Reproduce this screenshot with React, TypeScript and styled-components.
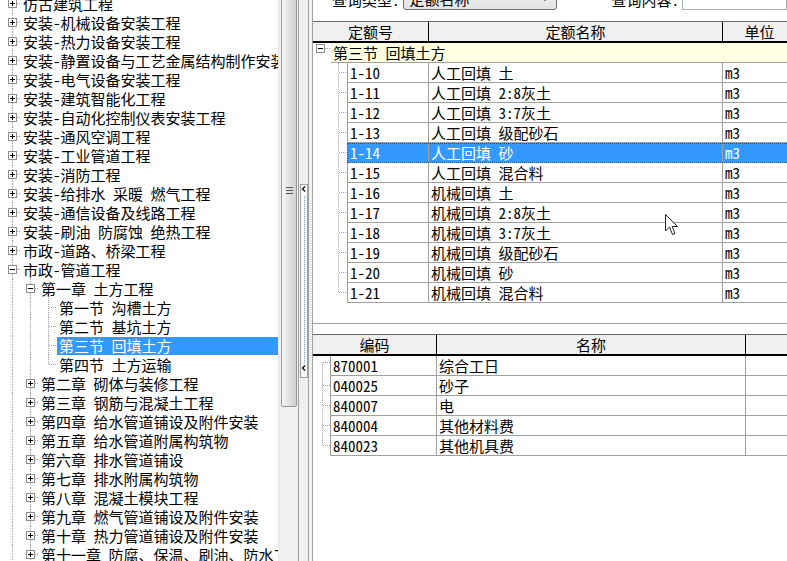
import React, {FC} from 'react';
import styled, {createGlobalStyle} from 'styled-components';

const FONT = `"Noto Sans Mono CJK SC", "Noto Sans CJK SC", "DejaVu Sans", sans-serif`;

const GlobalStyle = createGlobalStyle`
  html, body {
    margin: 0;
    padding: 0;
    background: #fff;
    overflow: hidden;
  }
  body {
    font-family: ${FONT};
    font-size: 15px;
    color: #000;
    font-feature-settings: "hwid";
  }
`;

const Screen = styled.div`
  position: relative;
  display: flex;
  width: 787px;
  height: 561px;
  overflow: hidden;
  background: #fff;
`;

/* ---------- left tree ---------- */

const TreePane = styled.div`
  width: 278px;
  flex: none;
  overflow: hidden;
`;

const TreeList = styled.div`
  margin-top: -6px;
`;

const TreeRow = styled.div`
  display: flex;
  align-items: flex-start;
  height: 19px;
  padding-left: 3px;
  white-space: pre;
`;

const TreeLabel = styled.span<{ $selected?: boolean }>`
  flex: 1;
  height: 18px;
  margin-top: 1px;
  padding-left: 2px;
  line-height: 17px;
  background: ${p => (p.$selected ? '#3399ff' : 'transparent')};
  color: ${p => (p.$selected ? '#fff' : '#000')};
`;

const ScrollTrack = styled.div`
  width: 20px;
  flex: none;
  box-sizing: border-box;
  padding: 0 1px 0 2px;
  background: #f0f0f0;
  border-left: 1px solid #e6e6e6;
`;

const ScrollThumb = styled.div`
  height: 434px;
  margin-top: -27px;
  box-sizing: border-box;
  border: 1px solid #979797;
  border-radius: 0 0 2px 2px;
  background: linear-gradient(to right, #f6f6f6, #e4e4e4 45%, #d2d2d2);
  display: flex;
  align-items: center;
  justify-content: center;
`;

const Grip = styled.div`
  width: 7px;
  height: 7px;
  background: repeating-linear-gradient(to bottom, #555 0 1px, transparent 1px 3px);
`;

const Splitter = styled.div`
  width: 11px;
  flex: none;
  box-sizing: border-box;
  padding-left: 1px;
  border-left: 1px solid #a0a0a0;
  border-right: 1px solid #a0a0a0;
  background: #f0f0f0;
  display: flex;
  align-items: center;
`;

const Gutter = styled.div`
  width: 3px;
  flex: none;
  background: #f0f0f0;
`;

type GuideKind = 'pipe' | 'blank' | 'tee' | 'ell';
type Toggle = '+' | '-';

const DOT = '#a0a0a0';

const TreeGuide: FC<{ kind: GuideKind; toggle?: Toggle }> = ({kind, toggle}) => (
  <svg width="18" height="19" viewBox="0 0 18 19" style={{flex: 'none'}}>
    {kind !== 'blank' && (
      <line x1="9.5" y1="0" x2="9.5" y2={kind === 'ell' ? 9.5 : 19} stroke={DOT} strokeDasharray="1 1"/>
    )}
    {(kind === 'tee' || kind === 'ell') && (
      <line x1="10" y1="9.5" x2="18" y2="9.5" stroke={DOT} strokeDasharray="1 1"/>
    )}
    {toggle && (
      <>
        <rect x="5.5" y="5.5" width="8" height="8" fill="#fff" stroke="#8f8f8f"/>
        <line x1="7" y1="9.5" x2="12" y2="9.5" stroke="#000"/>
        {toggle === '+' && <line x1="9.5" y1="7" x2="9.5" y2="12" stroke="#000"/>}
      </>
    )}
  </svg>
);

interface TreeNode {
  label: string;
  guides: GuideKind[];
  toggle?: Toggle;
  selected?: boolean;
}

const top = (label: string, toggle: Toggle = '+'): TreeNode => ({label, guides: ['tee'], toggle});
const chapter = (label: string, toggle: Toggle = '+'): TreeNode => ({label, guides: ['pipe', 'tee'], toggle});
const section = (label: string, last = false, selected = false): TreeNode => ({
  label,
  guides: ['pipe', 'pipe', last ? 'ell' : 'tee'],
  selected,
});

const tree: TreeNode[] = [
  top('仿古建筑工程'),
  top('安装-机械设备安装工程'),
  top('安装-热力设备安装工程'),
  top('安装-静置设备与工艺金属结构制作安装工程'),
  top('安装-电气设备安装工程'),
  top('安装-建筑智能化工程'),
  top('安装-自动化控制仪表安装工程'),
  top('安装-通风空调工程'),
  top('安装-工业管道工程'),
  top('安装-消防工程'),
  top('安装-给排水 采暖 燃气工程'),
  top('安装-通信设备及线路工程'),
  top('安装-刷油 防腐蚀 绝热工程'),
  top('市政-道路、桥梁工程'),
  top('市政-管道工程', '-'),
  chapter('第一章 土方工程', '-'),
  section('第一节 沟槽土方'),
  section('第二节 基坑土方'),
  section('第三节 回填土方', false, true),
  section('第四节 土方运输', true),
  chapter('第二章 砌体与装修工程'),
  chapter('第三章 钢筋与混凝土工程'),
  chapter('第四章 给水管道铺设及附件安装'),
  chapter('第五章 给水管道附属构筑物'),
  chapter('第六章 排水管道铺设'),
  chapter('第七章 排水附属构筑物'),
  chapter('第八章 混凝土模块工程'),
  chapter('第九章 燃气管道铺设及附件安装'),
  chapter('第十章 热力管道铺设及附件安装'),
  chapter('第十一章 防腐、保温、刷油、防水工程'),
];

const SplitHandle: FC = () => (
  <svg width="8" height="194" viewBox="0 0 8 194">
    <rect x="0.5" y="0.5" width="7" height="193" fill="#f8f8f8" stroke="#a0a0a0"/>
    <path d="M5 2.5 L2.5 5 L5 7.5" fill="none" stroke="#000" strokeWidth="1.2"/>
    <line x1="4.5" y1="12" x2="4.5" y2="180" stroke="#6f9fd8" strokeDasharray="1 1"/>
    <path d="M5 181.5 L2.5 184 L5 186.5" fill="none" stroke="#000" strokeWidth="1.2"/>
  </svg>
);

/* ---------- right side ---------- */

const Content = styled.div`
  flex: 1;
  min-width: 0;
  border-left: 1px solid #a0a0a0;
  display: flex;
  flex-direction: column;
  overflow: hidden;
  background: #fff;
`;

const QueryBar = styled.div`
  height: 21px;
  flex: none;
  overflow: hidden;
`;

const QueryInner = styled.div`
  display: flex;
  align-items: center;
  height: 24px;
  margin-top: -13px;
  padding-left: 19px;
  white-space: nowrap;
`;

const QueryLabel = styled.span<{ $gap?: number }>`
  margin-left: ${p => p.$gap ?? 0}px;
`;

const Combo = styled.div`
  position: relative;
  width: 154px;
  height: 22px;
  margin-left: 3px;
  box-sizing: border-box;
  border: 1px solid #707070;
  border-radius: 3px;
  background: linear-gradient(#f2f2f2, #e3e3e3);
  padding-left: 6px;
  line-height: 20px;
  display: flex;
  justify-content: space-between;
  align-items: center;
`;

const ComboArrow = styled.span`
  width: 0;
  height: 0;
  margin-right: 7px;
  border-left: 4px solid transparent;
  border-right: 4px solid transparent;
  border-top: 4px solid #333;
`;

const QueryInput = styled.div`
  flex: 1;
  height: 21px;
  margin-left: 3px;
  box-sizing: border-box;
  border: 1px solid #abadb3;
  background: #fff;
`;

const UpperGrid = styled.div`
  height: 303px;
  flex: none;
  box-sizing: border-box;
  border-bottom: 1px solid #a0a0a0;
  overflow: hidden;
`;

const LowerGrid = styled.div`
  margin-top: 10px;
  flex: 1;
  overflow: hidden;
`;

const HeaderRow = styled.div`
  display: flex;
  height: 22px;
  box-sizing: border-box;
  border-top: 1px solid #6a6a6a;
  border-bottom: 2px solid #000;
  background: #f0f0f0;
  white-space: nowrap;
`;

const HeadCell = styled.div<{ $w: number }>`
  width: ${p => p.$w}px;
  flex: none;
  box-sizing: border-box;
  border-right: 1px solid #000;
  text-align: center;
  line-height: 19px;
  overflow: hidden;
`;

const GroupRow = styled.div`
  display: flex;
  height: 20px;
`;

const GroupLabel = styled.div`
  flex: 1;
  box-sizing: border-box;
  background: #ffffe1;
  border-bottom: 1px solid #a0a0a0;
  padding-left: 2px;
  line-height: 19px;
  white-space: pre;
`;

const DataRow = styled.div`
  display: flex;
  height: 20px;
  white-space: pre;
`;

const Cells = styled.div<{ $selected?: boolean }>`
  display: flex;
  flex: 1;
  background: ${p => (p.$selected ? '#3399ff' : '#fff')};
  color: ${p => (p.$selected ? '#fff' : '#000')};
  outline: ${p => (p.$selected ? '1px dotted #1a4f8a' : 'none')};
  outline-offset: -1px;
`;

const Cell = styled.div<{ $w: number; $first?: boolean }>`
  width: ${p => p.$w}px;
  flex: none;
  box-sizing: border-box;
  border-bottom: 1px solid #a0a0a0;
  border-right: 1px solid #a0a0a0;
  border-left: ${p => (p.$first ? '1px solid #a0a0a0' : 'none')};
  padding-left: 2px;
  line-height: 19px;
  overflow: hidden;
`;

const UpperIndent: FC<{ last?: boolean }> = ({last}) => (
  <svg width="34" height="20" viewBox="0 0 34 20" style={{flex: 'none'}}>
    <line x1="25.5" y1="0" x2="25.5" y2={last ? 9.5 : 20} stroke={DOT} strokeDasharray="1 1"/>
    <line x1="26" y1="9.5" x2="34" y2="9.5" stroke={DOT} strokeDasharray="1 1"/>
  </svg>
);

const GroupToggle: FC = () => (
  <svg width="18" height="20" viewBox="0 0 18 20" style={{flex: 'none'}}>
    <rect x="3.5" y="1.5" width="8" height="8" fill="#fff" stroke="#8f8f8f"/>
    <line x1="5" y1="5.5" x2="10" y2="5.5" stroke="#000"/>
    <line x1="12" y1="5.5" x2="18" y2="5.5" stroke={DOT} strokeDasharray="1 1"/>
  </svg>
);

const LowerIndent: FC<{ pos: 'first' | 'mid' | 'last' }> = ({pos}) => (
  <svg width="17" height="20" viewBox="0 0 17 20" style={{flex: 'none'}}>
    <line
      x1="9.5"
      y1={pos === 'first' ? 6.5 : 0}
      x2="9.5"
      y2={pos === 'last' ? 9.5 : 20}
      stroke={DOT}
      strokeDasharray="1 1"
    />
    <line x1="10" y1={pos === 'first' ? 6.5 : 9.5} x2="17" y2={pos === 'first' ? 6.5 : 9.5} stroke={DOT} strokeDasharray="1 1"/>
  </svg>
);

const quotas = [
  ['1-10', '人工回填 土'],
  ['1-11', '人工回填 2:8灰土'],
  ['1-12', '人工回填 3:7灰土'],
  ['1-13', '人工回填 级配砂石'],
  ['1-14', '人工回填 砂'],
  ['1-15', '人工回填 混合料'],
  ['1-16', '机械回填 土'],
  ['1-17', '机械回填 2:8灰土'],
  ['1-18', '机械回填 3:7灰土'],
  ['1-19', '机械回填 级配砂石'],
  ['1-20', '机械回填 砂'],
  ['1-21', '机械回填 混合料'],
];

const resources = [
  ['870001', '综合工日'],
  ['040025', '砂子'],
  ['840007', '电'],
  ['840004', '其他材料费'],
  ['840023', '其他机具费'],
];

const Pointer = styled.svg`
  position: absolute;
  left: 665px;
  top: 214px;
`;

const App: FC = () => {
  return (
    <Screen>
      <GlobalStyle/>
      <TreePane>
        <TreeList>
          {tree.map(node => (
            <TreeRow key={node.label}>
              {node.guides.map((g, i) => (
                <TreeGuide key={i} kind={g} toggle={i === node.guides.length - 1 ? node.toggle : undefined}/>
              ))}
              <TreeLabel $selected={node.selected}>{node.label}</TreeLabel>
            </TreeRow>
          ))}
        </TreeList>
      </TreePane>

      <ScrollTrack>
        <ScrollThumb>
          <Grip/>
        </ScrollThumb>
      </ScrollTrack>

      <Splitter>
        <SplitHandle/>
      </Splitter>
      <Gutter/>

      <Content>
        <QueryBar>
          <QueryInner>
            <QueryLabel>查询类型:</QueryLabel>
            <Combo>
              定额名称
              <ComboArrow/>
            </Combo>
            <QueryLabel $gap={55}>查询内容:</QueryLabel>
            <QueryInput/>
          </QueryInner>
        </QueryBar>

        <UpperGrid>
          <HeaderRow>
            <HeadCell $w={116}>定额号</HeadCell>
            <HeadCell $w={294}>定额名称</HeadCell>
            <HeadCell $w={74}>单位</HeadCell>
          </HeaderRow>
          <GroupRow>
            <GroupToggle/>
            <GroupLabel>第三节 回填土方</GroupLabel>
          </GroupRow>
          {quotas.map(([code, name], i) => (
            <DataRow key={code}>
              <UpperIndent last={i === quotas.length - 1}/>
              <Cells $selected={code === '1-14'}>
                <Cell $w={82} $first>{code}</Cell>
                <Cell $w={294}>{name}</Cell>
                <Cell $w={74}>m3</Cell>
              </Cells>
            </DataRow>
          ))}
        </UpperGrid>

        <LowerGrid>
          <HeaderRow>
            <HeadCell $w={124}>编码</HeadCell>
            <HeadCell $w={309}>名称</HeadCell>
            <HeadCell $w={60}/>
          </HeaderRow>
          {resources.map(([code, name], i) => (
            <DataRow key={code}>
              <LowerIndent pos={i === 0 ? 'first' : i === resources.length - 1 ? 'last' : 'mid'}/>
              <Cells>
                <Cell $w={107} $first>{code}</Cell>
                <Cell $w={309}>{name}</Cell>
                <Cell $w={60}/>
              </Cells>
            </DataRow>
          ))}
        </LowerGrid>
      </Content>

      <Pointer width="14" height="23" viewBox="0 0 14 23">
        <path
          d="M0.5 0.5 L0.5 17 L4.5 13 L7.5 20.5 L10 19.5 L7.2 12.5 L12.5 12.5 Z"
          fill="#fff"
          stroke="#222"
          strokeLinejoin="round"
        />
      </Pointer>
    </Screen>
  );
};

export default App;
